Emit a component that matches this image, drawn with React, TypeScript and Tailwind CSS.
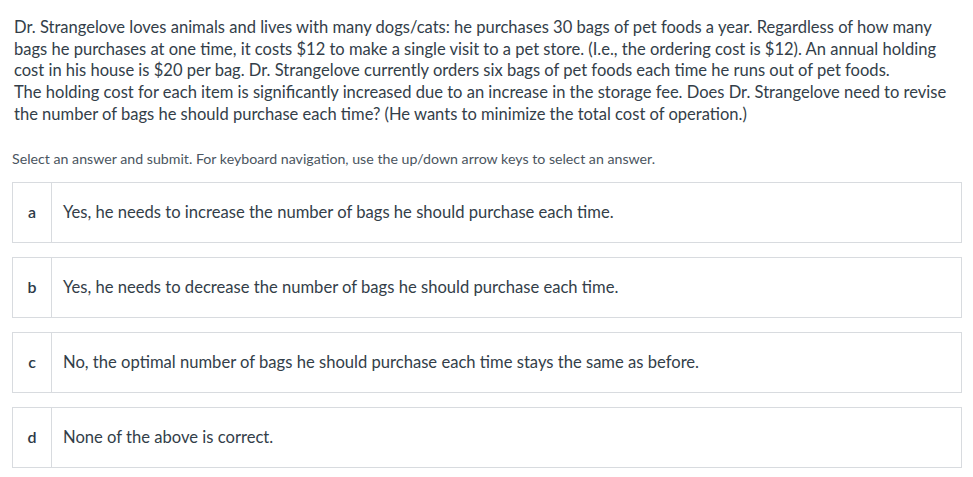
const options = [
  { key: 'a', text: 'Yes, he needs to increase the number of bags he should purchase each time.' },
  { key: 'b', text: 'Yes, he needs to decrease the number of bags he should purchase each time.' },
  { key: 'c', text: 'No, the optimal number of bags he should purchase each time stays the same as before.' },
  { key: 'd', text: 'None of the above is correct.' },
];

const lines = [
  'Dr. Strangelove loves animals and lives with many dogs/cats: he purchases 30 bags of pet foods a year. Regardless of how many',
  'bags he purchases at one time, it costs $12 to make a single visit to a pet store. (I.e., the ordering cost is $12). An annual holding',
  'cost in his house is $20 per bag. Dr. Strangelove currently orders six bags of pet foods each time he runs out of pet foods.',
  'The holding cost for each item is significantly increased due to an increase in the storage fee. Does Dr. Strangelove need to revise',
  'the number of bags he should purchase each time? (He wants to minimize the total cost of operation.)',
];

export default function App() {
  return (
    <div className="w-[973px] h-[477px] bg-white overflow-hidden font-['Lato',sans-serif] text-[#333e49]">
      <div className="pt-[17px] pl-[14px] text-[16.55px] leading-[21.7px]">
        {lines.map((l) => (
          <div key={l} className="whitespace-nowrap">{l}</div>
        ))}
      </div>

      <p className="mt-[24px] pl-[12px] text-[14.2px] leading-[18px] text-[#4a5560] whitespace-nowrap">
        Select an answer and submit. For keyboard navigation, use the up/down arrow keys to select an answer.
      </p>

      <ul className="mt-[14px] ml-[12px] w-[950px] flex flex-col gap-[14px]">
        {options.map((o) => (
          <li key={o.key} className="h-[61px] flex border border-[#d8dbdf] bg-white">
            <div className="w-[39px] border-r border-[#d8dbdf] flex items-center justify-center text-[16px] font-semibold text-[#2d3a47]">
              {o.key}
            </div>
            <div className="flex-1 flex items-center pl-[11px] text-[16.6px] text-[#333e49]">{o.text}</div>
          </li>
        ))}
      </ul>
    </div>
  );
}
